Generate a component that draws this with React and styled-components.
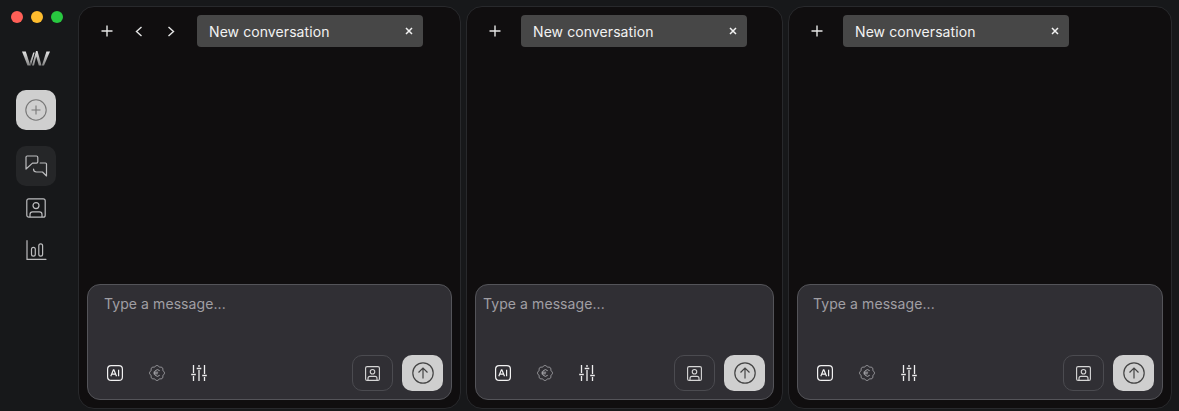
import React from 'react';
import styled, { createGlobalStyle } from 'styled-components';

const Global = createGlobalStyle`
  html, body { margin: 0; padding: 0; background: #17181a; }
  body { font-family: Inter, "Liberation Sans", sans-serif; }
`;

const Win = styled.div`
  width: 1179px; height: 411px; display: flex; overflow: hidden; background: #17181a;
  box-sizing: border-box; padding: 6px 7px 2px 0;
`;
const Sidebar = styled.aside`
  width: 78px; flex: none; display: flex; flex-direction: column; align-items: center;
  margin-top: -6px; padding-top: 11px; box-sizing: border-box;
`;
const Lights = styled.div`
  display: flex; gap: 8px; width: 52px; margin-left: -4px; height: 12px;
`;
const Light = styled.span`
  width: 12px; height: 12px; border-radius: 50%; background: ${p => p.$c};
`;
const LogoWrap = styled.div`
  margin: 27px 0 0 -6px; height: 16px; display: flex; width: 30px;
`;
const NavStack = styled.nav`
  margin: 24px 0 0 -6px; display: flex; flex-direction: column; align-items: center;
`;
const NewBtn = styled.button`
  width: 40px; height: 40px; border: 0; border-radius: 10px; background: #cfcfcf; padding: 0;
  display: flex; align-items: center; justify-content: center;
`;
const NavBtn = styled.button`
  width: 40px; height: ${p => p.$h}px; border: 0; border-radius: 10px; padding: 0;
  margin-top: ${p => p.$mt}px; color: #bcbcbe;
  background: ${p => p.$active ? '#252628' : 'transparent'};
  display: flex; align-items: center; justify-content: center;
`;
const Panes = styled.main`
  flex: 1; display: flex; gap: 5px; min-width: 0;
`;
const Pane = styled.section`
  width: ${p => p.$w}px; flex: none; box-sizing: border-box; background: #100e0f;
  border: 1px solid #28292c; border-radius: 16px;
  padding: 8px; display: flex; flex-direction: column; justify-content: space-between;
`;
const Header = styled.header`
  display: flex; align-items: center; padding-left: 4px;
`;
const HBtn = styled.button`
  width: 32px; height: 32px; border: 0; padding: 0; background: none; color: #e6e6e6;
  display: flex; align-items: center; justify-content: center;
`;
const Tab = styled.div`
  width: 226px; height: 32px; margin-left: 10px; box-sizing: border-box; padding: 0 10px 0 12px;
  border-radius: 4px; background: #474747; color: #f2f2f2; font-size: 14px; letter-spacing: 0.08px;
  display: flex; align-items: center; justify-content: space-between;
`;
const Close = styled.span`
  color: #f2f2f2; display: flex;
`;
const Composer = styled.div`
  height: 116px; box-sizing: border-box; background: #302f34; border: 1px solid #545459;
  border-radius: 13px; padding: 10px 8px 8px 7px;
  display: flex; flex-direction: column; justify-content: space-between;
`;
const Placeholder = styled.div`
  font-size: 14px; line-height: 17px; color: #a09fa4; letter-spacing: 0.08px;
  padding-left: ${p => p.$indent}px;
`;
const Tools = styled.div`
  display: flex; align-items: center; justify-content: space-between;
`;
const Left = styled.div`
  display: flex; align-items: center; gap: 26px; padding-left: 12px;
`;
const Right = styled.div`
  display: flex; gap: 9px;
`;
const ProfileBtn = styled.button`
  width: 41px; height: 36px; box-sizing: border-box; border: 1px solid #4b4b50; border-radius: 10px;
  background: transparent; padding: 0; color: #d6d6d6;
  display: flex; align-items: center; justify-content: center;
`;
const SendBtn = styled.button`
  width: 41px; height: 36px; border: 0; border-radius: 10px; background: #cfcfcf; padding: 0;
  display: flex; align-items: center; justify-content: center;
`;

const Plus = () => (
  <svg width="12" height="12" viewBox="0 0 12 12" fill="none" stroke="currentColor" strokeWidth="1.4"><path d="M6 .5v11M.5 6h11" /></svg>
);
const Chev = ({ right }) => (
  <svg width="8" height="11" viewBox="0 0 8 11" fill="none" stroke="currentColor" strokeWidth="1.4">
    <path d={right ? 'M1.5 1l5 4.500-5 4.500' : 'M6.500 1l-5 4.500 5 4.500'} />
  </svg>
);
const X = () => (
  <svg width="8" height="8" viewBox="0 0 8 8" fill="none" stroke="currentColor" strokeWidth="1.500"><path d="M1 1l6 6M7 1L1 7" /></svg>
);
const Logo = () => (
  <svg width="30" height="16" viewBox="0 0 30 16">
    <defs>
      <linearGradient id="lg" x1="0" y1="0" x2="0" y2="1">
        <stop offset="0" stopColor="#e4e4e4" /><stop offset="1" stopColor="#858585" />
      </linearGradient>
    </defs>
    <path fill="url(#lg)" d="M1 1.500h3.800L9.300 15.500H6.500z" />
    <path fill="url(#lg)" d="M9.200 11.500L12.300 2.500h1.400L9.900 15.500h-.4z" />
    <path fill="url(#lg)" d="M15 1h1.500L20.500 15.500H17.800L15.200 6.500 13 15.500H11z" />
    <path fill="url(#lg)" d="M25.400 1.500H29L23 15.500H20.900z" />
  </svg>
);
const CirclePlus = () => (
  <svg width="22" height="22" viewBox="0 0 22 22" fill="none" stroke="#777777" strokeWidth="1.100">
    <circle cx="11" cy="11" r="10.200" /><path d="M11 6.500v9M6.500 11h9" />
  </svg>
);
const Chats = () => (
  <svg width="24" height="22" viewBox="0 0 24 22" fill="none" stroke="currentColor" strokeWidth="1.200" strokeLinejoin="round" strokeLinecap="round">
    <path d="M3.200 1h9.200c.8 0 1.400.6 1.400 1.400V6.800c0 .8-.6 1.300-1.400 1.300H8.500L2 14V2.200C2 1.500 2.500 1 3.200 1z" />
    <path d="M16.200 8h5.300c.6 0 1 .4 1 1V21L18.500 17H12.500c-1.500 0-3-1.200-3-3" />
  </svg>
);
const Profile = ({ s = 20 }) => (
  <svg width={s} height={s} viewBox="0 0 20 20" fill="none" stroke="currentColor" strokeWidth={s < 20 ? 1.500 : 1.200}>
    <rect x=".8" y=".8" width="18.400" height="18.400" rx="2" />
    <circle cx="10" cy="7.600" r="3" />
    <path d="M4 19v-2.500c0-1.400 1.200-2.600 2.600-2.600h6.800c1.400 0 2.600 1.200 2.600 2.600V19" />
  </svg>
);
const Bars = () => (
  <svg width="21" height="20" viewBox="0 0 21 20" fill="none" stroke="currentColor" strokeWidth="1.200" strokeLinecap="round">
    <path d="M1 .7V19.300h19" />
    <rect x="5.500" y="7.400" width="3.800" height="8.700" rx="1.900" />
    <rect x="12.800" y="3.800" width="3.800" height="12.300" rx="1.900" />
  </svg>
);
const AI = () => (
  <svg width="16" height="16" viewBox="0 0 16 16" fill="none">
    <rect x=".6" y=".6" width="14.800" height="14.800" rx="3.500" stroke="#f2f2f2" strokeWidth="1.200" />
    <path d="M3.800 11.200L6.400 4.800h.5L9.500 11.200M4.800 9.200h3.700M11.600 4.800v6.400" stroke="#f2f2f2" strokeWidth="1.200" />
  </svg>
);
const badge = Array.from({ length: 96 }, (_, i) => {
  const t = (i / 96) * Math.PI * 2;
  const r = 7 + 0.5 * Math.cos(8 * t);
  return `${(8 + r * Math.cos(t)).toFixed(2)},${(8 + r * Math.sin(t)).toFixed(2)}`;
}).join(' ');
const Euro = () => (
  <svg width="16" height="16" viewBox="0 0 16 16" fill="none" stroke="#a3a3a7" strokeWidth="1">
    <polygon points={badge} />
    <path d="M10.700 5.700A3.200 3.200 0 1 0 10.700 10.300M4.600 7.200h4.600M4.600 8.800h4.200" />
  </svg>
);
const Sliders = () => (
  <svg width="16" height="16" viewBox="0 0 16 16" fill="none" stroke="#eeeeee" strokeWidth="1.300">
    <path d="M2.500 0v8M2.500 11v5M8 0v2M8 5v11M13.500 0v9M13.500 12v4M.2 9.500h4.600M5.700 3.500h4.600M11.200 10.500h4.600" />
  </svg>
);
const SendIcon = () => (
  <svg width="22" height="22" viewBox="0 0 22 22" fill="none" stroke="#444444" strokeWidth="1.200">
    <circle cx="11" cy="11" r="10.200" /><path d="M11 16.500V6M6.500 10.500L11 6l4.500 4.500" />
  </svg>
);

const panes = [
  { w: 383, nav: true, indent: 9 },
  { w: 317, indent: 0 },
  { w: 384, indent: 8 },
];

export default function App() {
  return (
    <Win>
      <Global />
      <Sidebar>
        <Lights>
          <Light $c="#ff5f57" /><Light $c="#febc2e" /><Light $c="#28c840" />
        </Lights>
        <LogoWrap><Logo /></LogoWrap>
        <NavStack>
          <NewBtn><CirclePlus /></NewBtn>
          <NavBtn $active $h={40} $mt={16}><Chats /></NavBtn>
          <NavBtn $h={22} $mt={11}><Profile /></NavBtn>
          <NavBtn $h={20} $mt={21}><Bars /></NavBtn>
        </NavStack>
      </Sidebar>
      <Panes>
        {panes.map((p, i) => (
          <Pane key={i} $w={p.w}>
            <Header>
              <HBtn><Plus /></HBtn>
              {p.nav && <HBtn><Chev /></HBtn>}
              {p.nav && <HBtn><Chev right /></HBtn>}
              <Tab>New conversation<Close><X /></Close></Tab>
            </Header>
            <Composer>
              <Placeholder $indent={p.indent}>Type a message...</Placeholder>
              <Tools>
                <Left><AI /><Euro /><Sliders /></Left>
                <Right>
                  <ProfileBtn><Profile s={15} /></ProfileBtn>
                  <SendBtn><SendIcon /></SendBtn>
                </Right>
              </Tools>
            </Composer>
          </Pane>
        ))}
      </Panes>
    </Win>
  );
}
